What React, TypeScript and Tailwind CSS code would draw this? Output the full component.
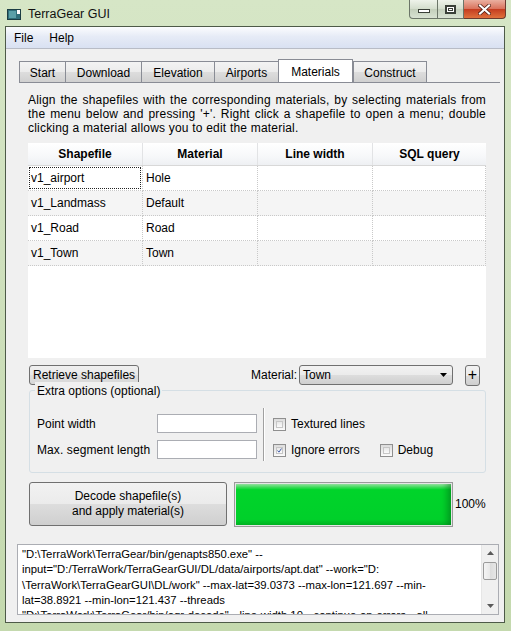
import React from "react";

const tabs = [
  { label: "Start", w: "w-[47px]" },
  { label: "Download", w: "w-[77px]" },
  { label: "Elevation", w: "w-[74px]" },
  { label: "Airports", w: "w-[65px]" },
  { label: "Materials", w: "w-[75px]", active: true },
  { label: "Construct", w: "w-[74px]" },
];

const rows = [
  { file: "v1_airport", mat: "Hole" },
  { file: "v1_Landmass", mat: "Default" },
  { file: "v1_Road", mat: "Road" },
  { file: "v1_Town", mat: "Town" },
];

const logLines = [
  '"D:\\TerraWork\\TerraGear/bin/genapts850.exe" --',
  'input="D:/TerraWork/TerraGearGUI/DL/data/airports/apt.dat" --work="D:',
  '\\TerraWork\\TerraGearGUI\\DL/work" --max-lat=39.0373 --max-lon=121.697 --min-',
  "lat=38.8921 --min-lon=121.437 --threads",
  '"D:\\TerraWork\\TerraGear/bin/ogr-decode" --line-width 10 --continue-on-errors --all-',
];

const Checkbox = ({ checked, label }: { checked?: boolean; label: string }) => (
  <div className="flex items-center gap-[5px]">
    <div className="flex h-[13px] w-[13px] items-center justify-center border border-[#8f8f8f] bg-[linear-gradient(to_bottom,#dcdcdc,#fbfbfb)] p-[2px]">
      <div className="flex h-full w-full items-center justify-center border border-[#c6c6c6] bg-[linear-gradient(to_bottom,#e8e8e8,#fafafa)]">
        {checked && (
          <svg width="9" height="9" viewBox="0 0 9 9">
            <path d="M1 4.5 L3.5 7.5 L8 1" fill="none" stroke="#3e5aa8" strokeWidth="1.8" />
          </svg>
        )}
      </div>
    </div>
    <span>{label}</span>
  </div>
);

export default function App() {
  return (
    <div className="flex h-[631px] w-[511px] flex-col overflow-hidden bg-[linear-gradient(to_bottom,#d6e6c6,#cfe0bd_40%,#c4d9ae)] font-['Liberation_Sans',Arial,sans-serif] text-[12px] text-[#000]">
      {/* title bar */}
      <div className="flex h-[26px] shrink-0 items-start justify-between">
        <div className="flex items-center gap-[7px] pl-[7px] pt-[5px]">
          <svg width="14" height="11" viewBox="0 0 14 11">
            <rect x="0.5" y="0.5" width="13" height="10" fill="#2f6f7a" stroke="#1c3d44" />
            <rect x="2" y="2" width="7" height="7" fill="#5aa0a8" />
            <rect x="10" y="1" width="3" height="4" fill="#ffffff" />
          </svg>
          <span className="text-[12.5px] text-[#111]">TerraGear GUI</span>
        </div>
        <div className="mr-[5px] flex h-[19px]">
          <div className="flex w-[29px] items-center justify-center rounded-bl-[4px] border border-t-0 border-[#6b7568] bg-[linear-gradient(to_bottom,#eef3ea,#d3ddcc_50%,#c3cfbb_51%,#d8e2d2)]">
            <div className="mt-[4px] h-[4px] w-[12px] border border-[#3a4038] bg-white" />
          </div>
          <div className="flex w-[26px] items-center justify-center border-b border-r border-[#6b7568] bg-[linear-gradient(to_bottom,#eef3ea,#d3ddcc_50%,#c3cfbb_51%,#d8e2d2)]">
            <div className="h-[9px] w-[11px] border-[2px] border-[#3a4038] bg-white p-[1px]">
              <div className="h-full w-full border border-[#3a4038]" />
            </div>
          </div>
          <div className="flex w-[42px] items-center justify-center rounded-br-[4px] border border-l-0 border-t-0 border-[#6b3a30] bg-[linear-gradient(to_bottom,#eab0a0,#d9715a_50%,#c43c20_51%,#e0703c)]">
            <svg width="13" height="11" viewBox="0 0 13 11">
              <path d="M2 1.5 L11 9.5 M11 1.5 L2 9.5" stroke="#4a1a10" strokeWidth="3.6" strokeLinecap="square" />
              <path d="M2 1.5 L11 9.5 M11 1.5 L2 9.5" stroke="#ffffff" strokeWidth="2.2" strokeLinecap="square" />
            </svg>
          </div>
        </div>
      </div>

      {/* client */}
      <div className="ml-[5px] flex h-[597px] w-[500px] flex-col border border-[#4d5a48] bg-[#f0f0f0]">
        <div className="flex h-[22px] shrink-0 items-center border-b border-[#b8bcc6] bg-[linear-gradient(to_bottom,#fbfcfe,#e6ebf6_45%,#d9e1f2)] pl-[8px]">
          <span>File</span>
          <span className="ml-[16px]">Help</span>
        </div>

        <div className="ml-[13px] mt-[11px] flex h-[22px] items-end">
          {tabs.map((t) =>
            t.active ? (
              <div
                key={t.label}
                className={`${t.w} -mb-[1px] flex h-[24px] items-center justify-center border border-b-0 border-[#898c95] bg-white`}
              >
                {t.label}
              </div>
            ) : (
              <div
                key={t.label}
                className={`${t.w} -mr-[1px] flex h-[21px] items-center justify-center border border-b-0 border-[#898c95] bg-[linear-gradient(to_bottom,#f3f3f3,#ebebeb_50%,#dddddd_51%,#d0d0d0)] pt-[1px]`}
              >
                {t.label}
              </div>
            )
          )}
        </div>
        <div className="ml-[13px] w-[481px] border-t border-[#898c95]" />

        <div className="ml-[22px] flex w-[458px] flex-col">
          <p className="mt-[10px] text-justify text-[12px] leading-[14px] tracking-[0.2px] [text-align-last:left]">
            Align the shapefiles with the corresponding materials, by selecting materials from the menu below and pressing '+'. Right click a shapefile to open a menu; double clicking a material allows you to edit the material.
          </p>

          <div className="mt-[8px] h-[215px] bg-white">
            <div className="grid h-[23px] grid-cols-[115px_115px_115px_113px] border-b border-[#d8d8d8] bg-[linear-gradient(to_bottom,#ffffff,#f7f8fa_60%,#eef0f3)] font-bold">
              {["Shapefile", "Material", "Line width", "SQL query"].map((h, i) => (
                <div
                  key={h}
                  className={`flex items-center justify-center ${i < 3 ? "border-r border-[#e2e3e5]" : ""}`}
                >
                  {h}
                </div>
              ))}
            </div>
            {rows.map((r, i) => (
              <div
                key={r.file}
                className={`grid h-[25px] grid-cols-[115px_115px_115px_113px] ${i % 2 ? "bg-[#f5f5f5]" : "bg-white"}`}
              >
                <div className="border-b border-r border-dotted border-[#c9c9c9] p-[1px]">
                  <div
                    className={`flex h-full items-center pl-[1px] ${i === 0 ? "border border-dotted border-[#222]" : "border border-transparent"}`}
                  >
                    {r.file}
                  </div>
                </div>
                <div className="flex items-center border-b border-r border-dotted border-[#c9c9c9] pl-[3px]">
                  {r.mat}
                </div>
                <div className="border-b border-r border-dotted border-[#c9c9c9]" />
                <div className="border-b border-r border-dotted border-[#c9c9c9]" />
              </div>
            ))}
          </div>

          <div className="mt-[7px] flex h-[20px] items-center">
            <button className="ml-[1px] flex h-[20px] items-center rounded-[3px] border border-[#707070] bg-[linear-gradient(to_bottom,#f0f0f0,#e8e8e8_50%,#dedede_51%,#d8d8d8)] px-[3px]">
              Retrieve shapefiles
            </button>
            <span className="ml-auto">Material:</span>
            <div className="ml-[2px] flex h-[20px] w-[154px] items-center justify-between rounded-[3px] border border-[#707070] bg-[linear-gradient(to_bottom,#f2f2f2,#ebebeb_50%,#dddddd_51%,#cfcfcf)] pl-[3px] pr-[5px]">
              <span>Town</span>
              <svg width="7" height="4" viewBox="0 0 7 4">
                <path d="M0 0 H7 L3.5 4 Z" fill="#000" />
              </svg>
            </div>
            <button className="ml-[12px] mr-[6px] flex h-[21px] w-[15px] items-center justify-center rounded-[3px] border border-[#707070] bg-[linear-gradient(to_bottom,#f2f2f2,#ebebeb_50%,#dddddd_51%,#cfcfcf)] text-[16px] leading-none">
              +
            </button>
          </div>

          <div className="relative ml-[1px] mt-[5px] flex h-[83px] w-[457px] rounded-[3px] border border-[#d5dfe5] pl-[7px] pt-[23px]">
            <span className="absolute -top-[9px] left-[5px] bg-[#f0f0f0] px-[2px]">Extra options (optional)</span>
            <div className="flex flex-col gap-[7px]">
              <div className="flex h-[19px] items-center">
                <span className="w-[120px]">Point width</span>
                <div className="h-[19px] w-[100px] border border-[#abadb3] bg-white" />
              </div>
              <div className="flex h-[19px] items-center">
                <span className="w-[120px] tracking-[0.1px]">Max. segment length</span>
                <div className="h-[19px] w-[100px] border border-[#abadb3] bg-white" />
              </div>
            </div>
            <div className="-mt-[6px] ml-[6px] h-[53px] w-[2px] border-l border-r border-l-[#a0a0a0] border-r-white" />
            <div className="ml-[8px] flex flex-col gap-[8px] pt-[1px]">
              <Checkbox label="Textured lines" />
              <div className="flex items-center">
                <Checkbox checked label="Ignore errors" />
                <div className="ml-[20px]">
                  <Checkbox label="Debug" />
                </div>
              </div>
            </div>
          </div>

          <div className="mt-[9px] flex h-[44px] items-center">
            <button className="ml-[1px] flex h-[44px] w-[198px] flex-col items-center justify-center rounded-[3px] border border-[#707070] bg-[linear-gradient(to_bottom,#f2f2f2,#ebebeb_50%,#dddddd_51%,#cfcfcf)] leading-[15px]">
              <span>Decode shapefile(s)</span>
              <span>and apply material(s)</span>
            </button>
            <div className="ml-[7px] h-[45px] w-[219px] border border-[#9a9a9a] bg-[#e6e6e6] p-[1px]">
              <div className="h-full w-full bg-[linear-gradient(to_bottom,#9eeaa8_0%,#3edc5a_8%,#00d42a_14%,#00d02a_86%,#00b824_100%)] shadow-[inset_-7px_0_6px_-3px_rgba(0,90,20,0.45)]" />
            </div>
            <span className="ml-[2px]">100%</span>
          </div>
        </div>

        <div className="ml-[11px] mt-[18px] flex h-[71px] w-[482px] border border-[#abadb3] bg-white">
          <div className="flex-1 overflow-hidden pl-[4px] pt-[2px] text-[11.3px] leading-[15.3px]">
            {logLines.map((l) => (
              <div key={l} className="whitespace-nowrap">
                {l}
              </div>
            ))}
          </div>
          <div className="flex w-[17px] flex-col border-l border-[#e6e6e6] bg-[#f0f0f0]">
            <div className="flex h-[16px] items-center justify-center">
              <svg width="7" height="4" viewBox="0 0 7 4">
                <path d="M0 4 H7 L3.5 0 Z" fill="#5a5a5a" />
              </svg>
            </div>
            <div className="mx-[1px] mt-[1px] h-[18px] rounded-[2px] border border-[#9b9b9b] bg-[linear-gradient(to_right,#f4f4f4,#e8e8e8_50%,#dcdcdc_51%,#e6e6e6)]" />
            <div className="mt-auto flex h-[16px] items-center justify-center">
              <svg width="7" height="4" viewBox="0 0 7 4">
                <path d="M0 0 H7 L3.5 4 Z" fill="#5a5a5a" />
              </svg>
            </div>
          </div>
        </div>
      </div>
    </div>
  );
}
